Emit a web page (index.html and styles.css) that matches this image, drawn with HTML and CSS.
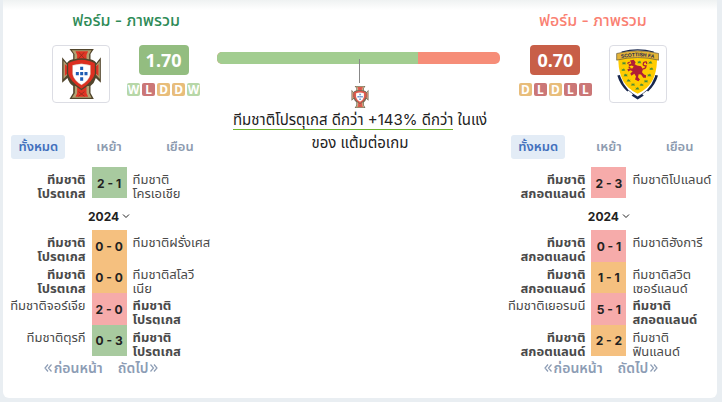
FILE: index.html
```
<!DOCTYPE html>
<html lang="th">
<head>
<meta charset="utf-8">
<meta name="viewport" content="width=device-width, initial-scale=1">
<title>ฟอร์ม - ภาพรวม</title>
<link rel="stylesheet" href="styles.css">
</head>
<body>

<!-- crests and icons used below -->
<svg class="defs" aria-hidden="true">
  <symbol id="crest-por" viewBox="33 15 116 150">
    <path d="M55 15H128L118 30V46Q133 50 135 58L149 40V116L134 102Q130 117 118 126V147L128 165H55L66 147V126Q53 117 49 102L33 116V40L48 58Q52 48 66 46V30Z" fill="#51452c"/>
    <path d="M62 19H121L114 31V47H70V31ZM37 50L50 65V91L37 105ZM146 50L133 65V91L146 105ZM71 126H114V147L121 161H62L71 147Z" fill="#b3a272"/>
    <path d="M73 22H111L106 33V48H78V33ZM41 60L50 68V88L41 96ZM142 60L133 68V88L142 96ZM78 128H106V148L111 158H73L78 148Z" fill="#e03424"/>
    <path d="M47 57Q66 43 91 43Q116 43 135 57V90Q130 114 91 139Q52 114 47 90Z" fill="#51452c"/>
    <path d="M51 58Q70 47 91 47Q112 47 131 58V89Q126 111 91 134Q56 111 51 89Z" fill="#dc2f20"/>
    <path d="M64 64Q91 55 118 64V90Q115 109 91 123Q67 109 64 90Z" fill="#fff" stroke="#c08a70" stroke-width="1"/>
    <path d="M87 68H96V78H87ZM87 84H96V94H87ZM87 100H96V110H87ZM74 84H83V94H74ZM100 84H109V94H100Z" fill="#1e5db4"/>
    <path d="M83 25L99 43M99 25L83 43M82 143L100 157M100 143L82 157" stroke="#7e2c1c" stroke-width="2"/>
  </symbol>
  <symbol id="crest-sco" viewBox="29 13 129 152">
    <path d="M33 92Q41 120 62 139Q76 154 94 164Q112 154 126 139Q147 120 155 92L143 90H45Z" fill="#17264d"/>
    <path d="M34 44H154Q153 101 123 134Q110 147 94 155Q78 147 65 134Q35 101 34 44Z" fill="#fff"/>
    <path d="M36 38H152Q153 99 122 128Q109 140 94 147Q79 140 66 128Q35 99 36 38Z" fill="#fc0"/>
    <path d="M46 22Q94 8 142 22" fill="none" stroke="#17264d" stroke-width="4"/>
    <path d="M31 26Q94 10 157 26V46Q94 30 31 46Z" fill="#e5b437" stroke="#5c543c" stroke-width="2"/>
    <path id="sco-arc" d="M36 42Q94 27 152 42" fill="none"/>
    <text class="sco-name"><textPath href="#sco-arc" startOffset="50%" text-anchor="middle">SCOTTISH FA</textPath></text>
    <path d="M71 47L82 45L88 52L85 58L92 62L104 64L110 73L107 82L113 89L119 91V99H111L104 89L97 88L95 97L101 104L96 109L86 104L89 95L84 87L75 93L72 86L79 79L72 76L66 80L63 73L72 70L78 71L82 65L76 62L69 64L66 59L75 56Z" fill="#b01e36"/>
    <path d="M109 72Q118 73 119 63Q107 64 112 53Q122 47 121 58M70 52L63 56M72 70L67 66M88 66L97 73" fill="none" stroke="#b01e36" stroke-width="4"/>
    <g fill="#468a38">
      <path id="thistle" d="M48 51L51 54L53 50L55 54L58 51L57 56L60 58H46L49 56Z"/>
      <use href="#thistle" x="79" y="-2"/><use href="#thistle" x="82" y="17"/><use href="#thistle" x="-2" y="20"/>
      <use href="#thistle" x="5" y="36"/><use href="#thistle" x="76" y="36"/><use href="#thistle" x="14" y="52"/>
      <use href="#thistle" x="66" y="54"/><use href="#thistle" x="27" y="64"/><use href="#thistle" x="40" y="76"/>
      <use href="#thistle" x="53" y="65"/><use href="#thistle" x="46" y="-3"/>
    </g>
    <path d="M66 137L80 148L73 155L60 144ZM122 137L108 148L115 155L128 144Z" fill="#fff"/>
  </symbol>
  <symbol id="chev" viewBox="0 0 8 8"><path d="M1 2.500L4 5.500L7 2.500" fill="none" stroke="currentColor"/></symbol>
  <symbol id="dbl" viewBox="0 0 8 8"><path d="M4 .5L1 4L4 7.500M7.500 .5L4.500 4L7.500 7.500" fill="none" stroke="currentColor" stroke-width="1.200"/></symbol>
</svg>

<main class="card">
  <header class="overview">
    <section class="team home">
      <h2>ฟอร์ม - ภาพรวม</h2>
      <div class="team-row">
        <span class="logo"><svg class="por" role="img" aria-label="โปรตุเกส"><use href="#crest-por"/></svg></span>
        <div class="form">
          <strong class="rating">1.70</strong>
          <div class="results"><span class="w">W</span><span class="l">L</span><span class="d">D</span><span class="d">D</span><span class="w">W</span></div>
        </div>
      </div>
    </section>

    <section class="compare">
      <div class="bar"><span class="bar-home"></span></div>
      <div class="marker"></div>
      <svg class="mini" aria-hidden="true"><use href="#crest-por"/></svg>
      <p><u>ทีมชาติโปรตุเกส ดีกว่า +143% ดีกว่า</u> ในแง่<br>ของ แต้มต่อเกม</p>
    </section>

    <section class="team away">
      <h2>ฟอร์ม - ภาพรวม</h2>
      <div class="team-row">
        <div class="form">
          <strong class="rating">0.70</strong>
          <div class="results"><span class="d">D</span><span class="l">L</span><span class="d">D</span><span class="l">L</span><span class="l">L</span></div>
        </div>
        <span class="logo"><svg class="sco" role="img" aria-label="สกอตแลนด์"><use href="#crest-sco"/></svg></span>
      </div>
    </section>
  </header>

  <div class="histories">
    <section class="history">
      <nav class="tabs">
        <button type="button" class="active">ทั้งหมด</button>
        <button type="button">เหย้า</button>
        <button type="button">เยือน</button>
      </nav>
      <ul class="matches">
        <li><b class="name">ทีมชาติ<br>โปรตุเกส</b><span class="score win">2 - 1</span><span class="name">ทีมชาติ<br>โครเอเชีย</span></li>
      </ul>
      <button type="button" class="year">2024<svg><use href="#chev"/></svg></button>
      <ul class="matches season">
        <li><b class="name">ทีมชาติ<br>โปรตุเกส</b><span class="score draw">0 - 0</span><span class="name">ทีมชาติฝรั่งเศส</span></li>
        <li><b class="name">ทีมชาติ<br>โปรตุเกส</b><span class="score draw">0 - 0</span><span class="name">ทีมชาติสโลวี<br>เนีย</span></li>
        <li><span class="name">ทีมชาติจอร์เจีย</span><span class="score loss">2 - 0</span><b class="name">ทีมชาติ<br>โปรตุเกส</b></li>
        <li><span class="name">ทีมชาติตุรกี</span><span class="score win">0 - 3</span><b class="name">ทีมชาติ<br>โปรตุเกส</b></li>
      </ul>
      <div class="pager">
        <button type="button"><svg><use href="#dbl"/></svg>ก่อนหน้า</button>
        <button type="button">ถัดไป<svg class="flip"><use href="#dbl"/></svg></button>
      </div>
    </section>

    <section class="history">
      <nav class="tabs">
        <button type="button" class="active">ทั้งหมด</button>
        <button type="button">เหย้า</button>
        <button type="button">เยือน</button>
      </nav>
      <ul class="matches">
        <li><b class="name">ทีมชาติ<br>สกอตแลนด์</b><span class="score loss">2 - 3</span><span class="name">ทีมชาติโปแลนด์</span></li>
      </ul>
      <button type="button" class="year">2024<svg><use href="#chev"/></svg></button>
      <ul class="matches season">
        <li><b class="name">ทีมชาติ<br>สกอตแลนด์</b><span class="score loss">0 - 1</span><span class="name">ทีมชาติฮังการี</span></li>
        <li><b class="name">ทีมชาติ<br>สกอตแลนด์</b><span class="score draw">1 - 1</span><span class="name">ทีมชาติสวิต<br>เซอร์แลนด์</span></li>
        <li><span class="name">ทีมชาติเยอรมนี</span><span class="score loss">5 - 1</span><b class="name">ทีมชาติ<br>สกอตแลนด์</b></li>
        <li><b class="name">ทีมชาติ<br>สกอตแลนด์</b><span class="score draw">2 - 2</span><span class="name">ทีมชาติ<br>ฟินแลนด์</span></li>
      </ul>
      <div class="pager">
        <button type="button"><svg><use href="#dbl"/></svg>ก่อนหน้า</button>
        <button type="button">ถัดไป<svg class="flip"><use href="#dbl"/></svg></button>
      </div>
    </section>
  </div>
</main>

</body>
</html>
```
FILE: styles.css
```
* { box-sizing: border-box; }
body { margin: 0; padding: 0 5px 4px 3px; background: #e9eef2; color: #222; font-family: Inter, "Noto Sans Thai", "Noto Sans", sans-serif; }
button { border: 0; padding: 0; background: none; font: inherit; cursor: pointer; }
ul { list-style: none; margin: 0; padding: 0; }
.defs { position: absolute; width: 0; height: 0; }

.card { background: linear-gradient(#eff2f2, #fff 10px); border-radius: 0 0 6px 6px; padding-bottom: 18px; }

/* top part */
.overview { display: grid; grid-template-columns: 3fr 4fr 3fr; height: 135px; }
.team { padding-top: 9px; }
.home { padding-left: 32px; color: #2e8b57; }
.away { padding-right: 34px; color: #fa8072; }
.team h2 { margin: 0 0 14px; font-size: 16px; line-height: 22px; font-weight: 500; text-align: center; }
.team-row { display: flex; justify-content: center; gap: 17px; }
.logo { display: flex; align-items: center; justify-content: center; width: 58px; height: 58px; border: 1px solid #dcdde4; border-radius: 4px; background: #fff; }
.por { width: 39px; height: 50px; }
.sco { width: 43px; height: 51px; }
.sco-name { font: bold 15px "Liberation Sans", sans-serif; fill: #17264d; }
.form { display: flex; flex-direction: column; align-items: center; gap: 8px; }
.rating { padding: 0 7px; border-radius: 4px; background: #93bd80; color: #fff; font: bold 18px/30px "Noto Sans", sans-serif; }
.away .rating { background: #c85f48; }
.results { display: flex; gap: 2px; }
.results span { width: 13px; height: 13px; border-radius: 2px; color: #fff; font: bold 12px/13px "Noto Sans", sans-serif; text-align: center; display: flex; justify-content: center; }
.results .w { background: #b7d7a8; }
.results .l { background: #cb7777; }
.results .d { background: #e8bd7b; }

.compare { display: flex; flex-direction: column; align-items: center; padding-top: 52px; }
.bar { align-self: stretch; height: 12px; margin-right: 3px; border-radius: 5px; background: #f68d78; overflow: hidden; }
.bar-home { display: block; width: 71%; height: 100%; background: #a2cd90; }
.marker { width: 1px; height: 24px; margin-top: -5px; background: #888; position: relative; }
.mini { width: 18px; height: 22px; margin-top: 3px; opacity: .8; }
.compare p { margin: 0; font-size: 15px; line-height: 23px; text-align: center; white-space: nowrap; }
.compare u { text-decoration: none; border-bottom: 1px solid #6fb52c; }

/* match lists */
.histories { display: flex; justify-content: space-between; }
.history { width: 30%; padding-right: 2px; }
.tabs { display: grid; grid-template-columns: repeat(3, 1fr); justify-items: center; margin-bottom: 8px; }
.tabs button { padding: 0 7px; height: 24px; border-radius: 3px; color: #8d9bb0; font-size: 13px; font-weight: 600; white-space: nowrap; }
.tabs .active { background: #e3ecf6; color: #4270bd; }

.matches { display: grid; grid-auto-rows: 31px; }
.season { height: 126px; grid-auto-rows: 1fr; }
.matches li { display: grid; grid-template-columns: 1fr 35px 1fr; column-gap: 6px; min-height: 0; overflow: hidden; }
.name { min-width: 0; padding-top: 5px; color: #4a4a4a; font-size: 13px; line-height: 14px; white-space: nowrap; }
.name:first-child { display: flex; flex-direction: column; align-items: flex-end; text-align: right; }
b.name { font-weight: 700; }
.score { display: flex; align-items: center; justify-content: center; border-bottom: 1px solid rgba(0, 0, 0, .2); color: #222; font-size: 12px; font-weight: 700; white-space: nowrap; }
.win { background: #a8ca9f; }
.draw { background: #f5c07f; }
.loss { background: #f6abaa; }

.year { display: flex; align-items: center; gap: 3px; height: 32px; margin: 0 auto; padding-top: 4px; color: #222; font-size: 12px; font-weight: 700; }
.year svg { width: 8px; height: 8px; }
.pager { display: flex; justify-content: center; gap: 15px; padding-right: 16px; height: 24px; color: #8d9db5; }
.pager button { display: flex; align-items: center; gap: 2px; color: inherit; font-size: 14px; font-weight: 600; }
.pager svg { width: 8px; height: 8px; }
.flip { transform: scaleX(-1); }
```
